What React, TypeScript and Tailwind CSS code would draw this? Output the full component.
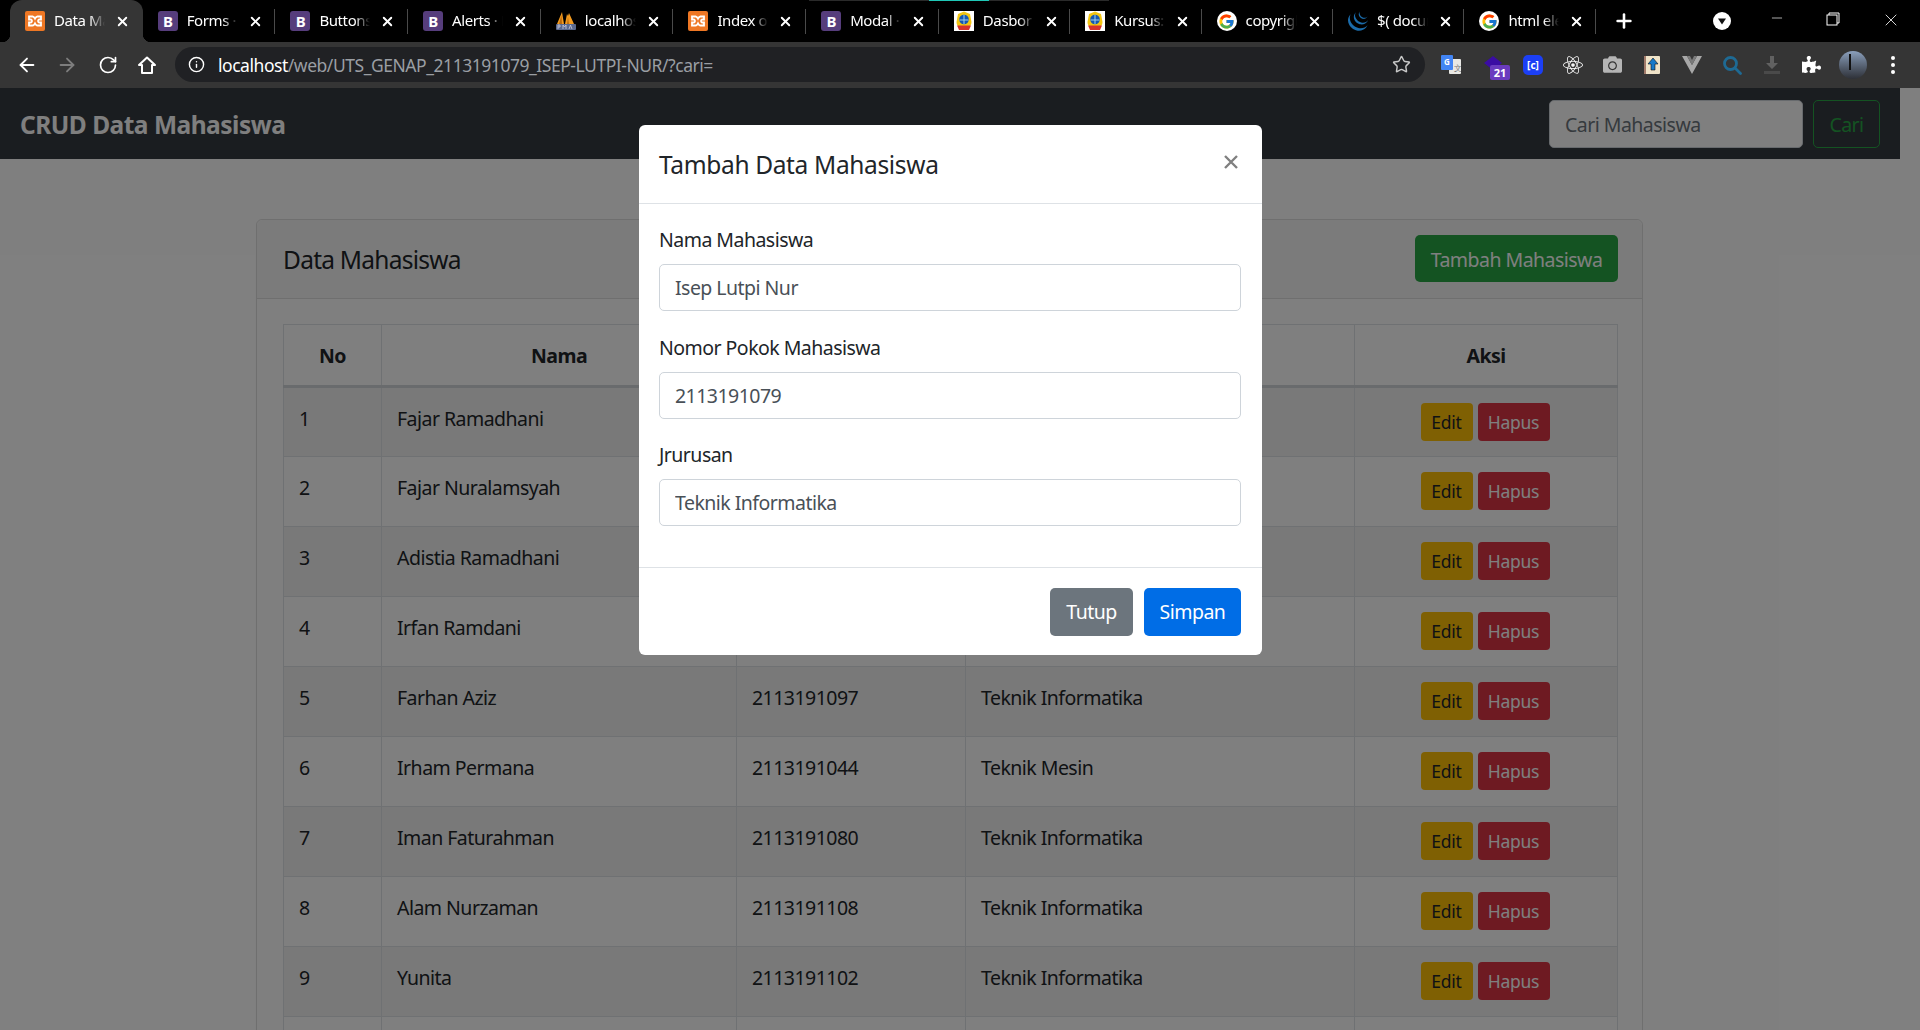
import React from "react";
import { ArrowLeft, ArrowRight, RotateCw, Info, Star, X, Plus, Minus } from "lucide-react";
import { FcGoogle } from "react-icons/fc";
import { SiJquery } from "react-icons/si";
import { FaReact, FaCamera, FaPuzzlePiece } from "react-icons/fa";

const Xampp = () => (
  <svg viewBox="0 0 20 20" className="w-5 h-5">
    <rect width="20" height="20" rx="2" fill="#ee7724" />
    <path d="M4 5.500h3.600c1.300 0 1.900 1.200 2.400 2.200.5-1 1.100-2.200 2.400-2.200H16v3h-1.800c-.7 0-1 .6-1.200 1.500.2.900.5 1.500 1.200 1.500H16v3h-3.600c-1.300 0-1.900-1.200-2.400-2.200-.5 1-1.100 2.200-2.400 2.200H4v-3h1.800c.7 0 1-.6 1.200-1.500-.2-.9-.5-1.500-1.200-1.500H4z" fill="none" stroke="#fff" strokeWidth="1.800" />
  </svg>
);
const Boot = () => (
  <span className="w-5 h-5 rounded-[3px] bg-[#563d7c] text-white text-[15px] leading-5 font-bold text-center shrink-0">B</span>
);
const Pma = () => (
  <svg viewBox="0 0 20 20" className="w-5 h-5">
    <path d="M1 13 6 1l2 12zM9 13l2-10 1 2 1-3 5 11z" fill="#f29a1f" />
    <path d="M5.500 4 6 13H3zM12 6l1 7h-2z" fill="#b96a10" />
    <rect x="0" y="13" width="20" height="6" rx="1" fill="#5a6a90" />
    <path d="M2 18v-4h2v2H2m5 2v-4l1.500 2 1.500-2v4m3 0 1.500-4 1.500 4" stroke="#ccd" strokeWidth=".8" fill="none" />
  </svg>
);
const Unpam = () => (
  <svg viewBox="0 0 20 20" className="w-5 h-5">
    <rect width="20" height="20" fill="#fff" />
    <path d="M10 .5 16 3l1.500 8c0 4-3.500 6-7.500 6s-7.500-2-7.500-6L4 3z" fill="#f3c612" />
    <circle cx="10" cy="8.500" r="4.800" fill="#1558b0" />
    <path d="M5.500 9h9M10 4v9" stroke="#9fd0ee" strokeWidth="1" />
    <path d="M3 14.500h14l-2 4.500H5z" fill="#d8322a" />
  </svg>
);
const Goog = () => (
  <span className="w-5 h-5 rounded-full bg-white flex items-center justify-center shrink-0">
    <FcGoogle size={17} />
  </span>
);

const tabs: [string, React.ReactNode][] = [
  ["Data Mahasiswa", <Xampp />],
  ["Forms · Bootstrap", <Boot />],
  ["Buttons · Bootstrap", <Boot />],
  ["Alerts · Bootstrap", <Boot />],
  ["localhost / phpMyAdmin", <Pma />],
  ["Index of /web", <Xampp />],
  ["Modal · Bootstrap", <Boot />],
  ["Dasbor", <Unpam />],
  ["Kursus: Web", <Unpam />],
  ["copyright html", <Goog />],
  ["$( document ).ready", <SiJquery size={20} color="#1b6cab" />],
  ["html element", <Goog />],
];

const rows = [
  ["1", "Fajar Ramadhani", "2113191001", "Teknik Informatika"],
  ["2", "Fajar Nuralamsyah", "2113191002", "Teknik Informatika"],
  ["3", "Adistia Ramadhani", "2113191003", "Teknik Informatika"],
  ["4", "Irfan Ramdani", "2113191004", "Teknik Informatika"],
  ["5", "Farhan Aziz", "2113191097", "Teknik Informatika"],
  ["6", "Irham Permana", "2113191044", "Teknik Mesin"],
  ["7", "Iman Faturahman", "2113191080", "Teknik Informatika"],
  ["8", "Alam Nurzaman", "2113191108", "Teknik Informatika"],
  ["9", "Yunita", "2113191102", "Teknik Informatika"],
];

const Field = ({ label, value }: { label: string; value: string }) => (
  <div className="mb-[20.500px]">
    <label className="block text-[19.500px] leading-[31px] mb-[9px] text-[#212529]">{label}</label>
    <input
      readOnly
      value={value}
      className="block w-full h-[47px] px-[15px] border border-[#ced4da] rounded-[5px] bg-white text-[19.500px] text-[#495057] outline-none"
    />
  </div>
);

export default function App() {
  return (
    <div className="h-[1030px] flex flex-col overflow-hidden bg-white font-['Noto_Sans',sans-serif] tracking-[-0.53px] text-[19.500px]">
      {/* tab strip */}
      <div className="relative h-[42px] shrink-0 bg-black flex items-stretch pl-[10px] text-[15px] text-white">
        <div className="absolute top-0 left-[809px] w-[300px] h-px bg-[#2a2a2a]" />
        <div className="absolute top-0 left-[929px] w-[60px] h-px bg-[#1fc7b6]" />
        {tabs.map(([title, icon], i) => (
          <div
            key={i}
            className={`relative shrink-0 flex items-center pl-[15px] ${i < 7 ? "w-[132.700px]" : "w-[131.400px]"} ${i === 0 ? "bg-[#353535] rounded-t-[12px]" : ""}`}
          >
            {i === 0 && (
              <>
                <span className="absolute left-[-8px] bottom-0 w-2 h-2 bg-[radial-gradient(circle_at_0_0,transparent_8px,#353535_8.500px)]" />
                <span className="absolute right-[-8px] bottom-0 w-2 h-2 bg-[radial-gradient(circle_at_100%_0,transparent_8px,#353535_8.500px)]" />
              </>
            )}
            <span className="w-5 h-5 shrink-0 flex items-center justify-center">{icon}</span>
            <span className="ml-[9px] mt-[-2px] w-[51px] overflow-hidden whitespace-nowrap tracking-[-0.4px] [mask-image:linear-gradient(to_right,black_70%,transparent)]">
              {title}
            </span>
            <X size={15} strokeWidth={3} className="ml-[10px] shrink-0" />
            {i > 0 && <span className="absolute right-0 top-[9px] w-px h-[25px] bg-[#4a4a4a]" />}
          </div>
        ))}
        <Plus size={22} strokeWidth={2.800} className="ml-[17px] self-center" />
        <span className="ml-[78px] self-center w-[18px] h-[18px] rounded-full bg-white flex items-center justify-center">
          <svg viewBox="0 0 10 10" className="w-[10px] h-[10px]"><path d="M1 2.500h8L5 8.500z" fill="#111" /></svg>
        </span>
        <Minus size={16} strokeWidth={1} className="ml-[38px] mt-[10px]" />
        <svg viewBox="0 0 14 14" className="w-[14px] h-[14px] ml-[41px] mt-[12px]" fill="none" stroke="#fff" strokeWidth="1">
          <rect x="1" y="3" width="10" height="10" />
          <path d="M3 3V1h10v10h-2" />
        </svg>
        <X size={20} strokeWidth={1} className="ml-[41px] mt-[10px]" />
      </div>

      {/* toolbar */}
      <div className="h-[46px] shrink-0 bg-[#353535] flex items-center pb-[1px] text-white">
        <ArrowLeft size={22} strokeWidth={2} className="ml-[16px] shrink-0" />
        <ArrowRight size={22} strokeWidth={2} color="#7d7d7d" className="ml-[18px] shrink-0" />
        <RotateCw size={20} strokeWidth={2} className="ml-[20px] shrink-0" />
        <svg viewBox="0 0 20 20" className="w-5 h-5 ml-[19px] shrink-0" fill="none" stroke="#fff" strokeWidth="2">
          <path d="M2 10 10 2.500 18 10h-3v8H5v-8z" strokeLinejoin="round" />
        </svg>
        <div className="ml-[18px] w-[1250px] h-[35px] rounded-full bg-[#202124] flex items-center pl-[13px] pr-[14px] shrink-0">
          <Info size={17} strokeWidth={2} />
          <span className="ml-[13px] mt-[1px] flex-1 text-[17.500px] tracking-[-0.46px] whitespace-nowrap">
            localhost<span className="text-[#9a9ea3]">/web/UTS_GENAP_2113191079_ISEP-LUTPI-NUR/?cari=</span>
          </span>
          <Star size={19} strokeWidth={1.800} color="#c8c8c8" />
        </div>
        <div className="flex items-center ml-[16px] gap-[20px]">
          {/* translate */}
          <svg viewBox="0 0 20 20" className="w-5 h-5 shrink-0">
            <rect x="8" y="4" width="12" height="15" rx="1" fill="#e8e8e4" />
            <rect x="0" y="0" width="12" height="15" rx="1" fill="#4285f4" />
            <text x="3" y="10" fontSize="8" fontWeight="700" fill="#fff">G</text>
            <text x="13" y="16" fontSize="8" fill="#777">文</text>
          </svg>
          <span className="relative w-5 h-5 shrink-0 block ml-[2px]">
            <svg viewBox="0 0 20 20" className="w-[20px] h-[20px]"><path d="M10 1 19 8l-9 7-9-7z" fill="#3a0ca3" /></svg>
            <span className="absolute left-[7px] top-[10px] w-[20px] h-[15px] rounded-[2px] bg-[#6a3bbf] text-white text-[11px] leading-[15px] font-bold text-center tracking-normal">21</span>
          </span>
          <span className="w-5 h-5 rounded-[5px] bg-[#1c3ff5] text-white text-[10px] leading-5 font-bold text-center shrink-0 tracking-normal">[c]</span>
          <FaReact size={20} color="#f2f2f2" className="shrink-0" />
          <FaCamera size={19} color="#b5b5b5" className="shrink-0" />
          <svg viewBox="0 0 20 20" className="w-5 h-5 shrink-0">
            <rect x="2" y="1" width="16" height="18" rx="1" fill="#efe3c8" />
            <rect x="2" y="1" width="2" height="18" fill="#a07a6a" />
            <path d="M11 3 16 9h-3v6H9V9H6z" fill="#1779c9" stroke="#111" strokeWidth=".6" />
          </svg>
          <svg viewBox="0 0 20 18" className="w-5 h-[18px] shrink-0">
            <path d="M0 0h5l5 9 5-9h5L10 18z" fill="#a8a8a8" />
            <path d="M5 0h3l2 4 2-4h3l-5 9z" fill="#7a7a7a" />
          </svg>
          <svg viewBox="0 0 20 20" className="w-5 h-5 shrink-0" fill="none" stroke="#1e6a94" strokeWidth="2.800">
            <circle cx="8.500" cy="8.500" r="6" />
            <path d="m13 13 5.500 5.500" strokeLinecap="round" />
          </svg>
          <svg viewBox="0 0 20 20" className="w-5 h-5 shrink-0" fill="#616161">
            <path d="M8 1h4v7h4l-6 6-6-6h4z" />
            <rect x="2" y="16" width="16" height="3" fill="#4a4a4a" />
          </svg>
          <FaPuzzlePiece size={19} color="#fff" className="shrink-0" />
          <span className="w-7 h-7 rounded-full bg-gradient-to-b from-[#8ba0bd] to-[#2e3138] shrink-0 ml-[-2px] relative">
            <span className="absolute left-[10px] top-[3px] w-[1.500px] h-[16px] bg-[#111]" />
          </span>
          <span className="flex flex-col gap-[3px] ml-[4px] shrink-0">
            <span className="w-1 h-1 rounded-full bg-white" />
            <span className="w-1 h-1 rounded-full bg-white" />
            <span className="w-1 h-1 rounded-full bg-white" />
          </span>
        </div>
      </div>

      {/* page */}
      <div className="relative flex-1 overflow-hidden bg-white">
        <nav className="w-[1900px] h-[71px] bg-[#343a40] flex items-center justify-between px-5">
          <span className="text-white text-[24.500px] font-bold tracking-[-0.5px] mt-[4px]">CRUD Data Mahasiswa</span>
          <div className="flex items-center gap-[10px] mt-[1px]">
            <input
              placeholder="Cari Mahasiswa"
              className="w-[254px] h-[47.500px] px-[15px] rounded-[5px] bg-white border border-[#ced4da] text-[19.500px] placeholder:text-[#6c757d] outline-none"
            />
            <button className="w-[67px] h-[47.500px] pt-[2px] rounded-[5px] border border-[#28a745] text-[#28a745] text-[19.500px]">Cari</button>
          </div>
        </nav>

        <main className="w-[1900px] pt-[60px] flex justify-center">
          <div className="w-[1387px] ml-[-1px] border border-[#dfdfdf] rounded-[6px] bg-white text-[#212529]">
            <div className="h-[79px] pl-[26px] pr-[24px] flex items-center justify-between bg-[#f7f7f7] border-b border-[#dfdfdf] rounded-t-[6px]">
              <h2 className="text-[24.500px] tracking-[-0.75px] mt-[2px]">Data Mahasiswa</h2>
              <button className="w-[203px] h-[47px] mb-[1px] pt-[2px] rounded-[5px] bg-[#28a745] text-white text-[19.500px]">Tambah Mahasiswa</button>
            </div>
            <div className="pt-[25px] pb-[25px] pl-[26px] pr-[24px]">
              <table className="w-full table-fixed border-collapse text-[19.500px]">
                <colgroup>
                  <col className="w-[98px]" />
                  <col className="w-[355px]" />
                  <col className="w-[229px]" />
                  <col className="w-[389px]" />
                  <col />
                </colgroup>
                <thead>
                  <tr className="h-[62px]">
                    {["No", "Nama", "Npm", "Jurusan", "Aksi"].map((h) => (
                      <th key={h} className="border border-[#dee2e6] border-b-[3px] border-b-[#d3d6da] pt-[2px] text-center font-bold">{h}</th>
                    ))}
                  </tr>
                </thead>
                <tbody>
                  {rows.map((r, i) => (
                    <tr key={r[0]} className={`h-[70px] ${i % 2 === 0 ? "bg-[#f2f2f2]" : ""}`}>
                      {r.map((c, j) => (
                        <td key={j} className="border border-[#dee2e6] px-[15px] pt-[16px] align-top leading-[30px]">{c}</td>
                      ))}
                      <td className="border border-[#dee2e6] align-top pt-[15px]">
                        <div className="flex justify-center gap-[5px] pr-[2px] tracking-[-0.25px]">
                          <button className="w-[52px] h-[38px] rounded-[4px] bg-[#ffc107] text-[#212529] text-[17.500px]">Edit</button>
                          <button className="w-[72px] h-[38px] rounded-[4px] bg-[#dc3545] text-white text-[17.500px]">Hapus</button>
                        </div>
                      </td>
                    </tr>
                  ))}
                  <tr className="h-[70px]">
                    {[0, 1, 2, 3, 4].map((k) => (
                      <td key={k} className="border border-[#dee2e6]" />
                    ))}
                  </tr>
                </tbody>
              </table>
            </div>
          </div>
        </main>

        {/* backdrop + modal */}
        <div className="absolute inset-0 bg-black/50" />
        <div className="absolute inset-0 pl-px pr-5 pt-[37px] flex justify-center items-start">
          <div className="w-[623px] bg-white rounded-[6px] text-[#212529]">
            <div className="h-[79px] pl-5 pr-[21px] flex items-center justify-between border-b border-[#dee2e6]">
              <h3 className="text-[24.500px] tracking-[-0.35px] mt-[2px]">Tambah Data Mahasiswa</h3>
              <svg viewBox="0 0 14 14" className="w-[14px] h-[14px] mt-[-5px] mr-[3px]" stroke="#808080" strokeWidth="2.400">
                <path d="M1 1l12 12M13 1 1 13" />
              </svg>
            </div>
            <div className="pl-5 pr-[21px] pt-5 pb-5 h-[363px]">
              <Field label="Nama Mahasiswa" value="Isep Lutpi Nur" />
              <Field label="Nomor Pokok Mahasiswa" value="2113191079" />
              <Field label="Jrurusan" value="Teknik Informatika" />
            </div>
            <div className="h-[88px] border-t border-[#dee2e6] flex items-center justify-end gap-[11px] pl-5 pr-[21px]">
              <button className="w-[83px] h-[48px] rounded-[5px] bg-[#6c757d] text-white text-[19.500px]">Tutup</button>
              <button className="w-[97px] h-[48px] rounded-[5px] bg-[#006de6] text-white text-[19.500px]">Simpan</button>
            </div>
          </div>
        </div>
      </div>
    </div>
  );
}
